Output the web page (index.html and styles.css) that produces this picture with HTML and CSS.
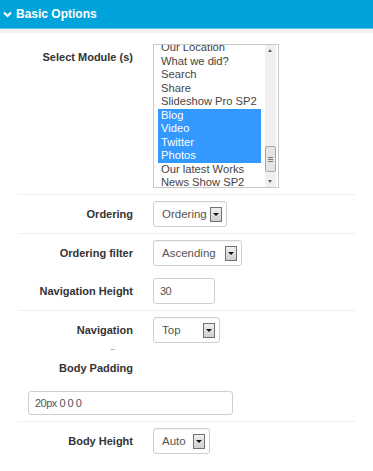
FILE: index.html
```html
<!DOCTYPE html>
<html>
<head>
<meta charset="utf-8">
<link rel="stylesheet" href="styles.css">
</head>
<body>
<div class="panel">
  <div class="panel-head">
    <svg class="chev" width="9" height="7" viewBox="0 0 9 7"><path d="M1 1.5 L4.5 5 L8 1.5" fill="none" stroke="#fff" stroke-width="2"/></svg>
    <span>Basic Options</span>
  </div>
  <div class="panel-strip"></div>
  <div class="form">
    <div class="row row-first sep">
      <div class="label">Select Module (s)</div>
      <div class="listbox">
        <div class="list-items">
          <div class="item">Our Location</div>
          <div class="item">What we did?</div>
          <div class="item">Search</div>
          <div class="item">Share</div>
          <div class="item">Slideshow Pro SP2</div>
          <div class="item sel">Blog</div>
          <div class="item sel">Video</div>
          <div class="item sel">Twitter</div>
          <div class="item sel">Photos</div>
          <div class="item">Our latest Works</div>
          <div class="item">News Show SP2</div>
        </div>
        <div class="scrollbar">
          <div class="sb-arrow up"></div>
          <div class="sb-track"><div class="sb-thumb"><span></span><span></span><span></span></div></div>
          <div class="sb-arrow down"></div>
        </div>
      </div>
    </div>
    <div class="row sep">
      <div class="label">Ordering</div>
      <div class="select w-ordering"><span class="sel-text">Ordering</span><span class="btn"></span></div>
    </div>
    <div class="row">
      <div class="label">Ordering filter</div>
      <div class="select w-asc"><span class="sel-text">Ascending</span><span class="btn"></span></div>
    </div>
    <div class="row sep">
      <div class="label">Navigation Height</div>
      <div class="input w-nav">30</div>
    </div>
    <div class="row row-open">
      <div class="label">Navigation</div>
      <div class="select w-top"><span class="sel-text">Top</span><span class="btn"></span></div>
    </div>
    <div class="stack sep">
      <div class="dots">...</div>
      <div class="label">Body Padding</div>
      <div class="input w-pad">20px 0 0 0</div>
    </div>
    <div class="row">
      <div class="label">Body Height</div>
      <div class="select w-auto"><span class="sel-text">Auto</span><span class="btn"></span></div>
    </div>
  </div>
</div>
</body>
</html>
```

FILE: styles.css
```css
html, body {
  margin: 0;
  padding: 0;
  background: #fff;
}
body {
  font-family: "Liberation Sans", Arial, sans-serif;
  color: #333;
}
.panel-head {
  height: 28px;
  background: #00a4db;
  border-bottom: 1px solid #5fc3e6;
  display: flex;
  align-items: center;
  color: #fff;
  font-size: 12px;
  font-weight: bold;
}
.chev {
  margin-left: 3px;
  margin-right: 4px;
}
.panel-strip {
  height: 4px;
  background: #f2f2f2;
}
.form {
  margin: 0 18px;
}
.row {
  display: flex;
  gap: 20px;
  padding: 6px 0;
}
.row-first {
  padding-top: 11px;
}
.row-open {
  padding-bottom: 0;
}
.sep {
  border-bottom: 1px solid #efefef;
}
.label {
  width: 115px;
  flex: none;
  text-align: right;
  font-size: 11px;
  font-weight: bold;
  line-height: 26px;
  color: #333;
}
.listbox {
  width: 124px;
  height: 142px;
  border: 1px solid #c8c8c8;
  display: flex;
  overflow: hidden;
  background: #fff;
}
.list-items {
  flex: 1;
  padding: 0 0 0 4px;
  margin-top: -4px;
  font-size: 11.2px;
  color: #444;
}
.item {
  height: 13.5px;
  line-height: 13.5px;
  padding-left: 3px;
  white-space: nowrap;
}
.item.sel {
  background: #3399ff;
  color: #fff;
}
.scrollbar {
  width: 11px;
  flex: none;
  margin: 0 2px 0 4px;
  display: flex;
  flex-direction: column;
  background: #f0f0f0;
}
.sb-arrow {
  height: 11px;
  position: relative;
}
.sb-arrow::after {
  content: "";
  position: absolute;
  left: 3px;
  top: 4px;
  border-left: 2.5px solid transparent;
  border-right: 2.5px solid transparent;
}
.sb-arrow.up::after {
  border-bottom: 3px solid #606060;
}
.sb-arrow.down::after {
  border-top: 3px solid #606060;
}
.sb-track {
  flex: 1;
  display: flex;
  flex-direction: column;
  justify-content: flex-end;
  padding-bottom: 4px;
}
.sb-thumb {
  height: 24px;
  background: #e4e4e4;
  border: 1px solid #a8a8a8;
  border-radius: 2px;
  display: flex;
  flex-direction: column;
  align-items: center;
  justify-content: center;
  gap: 1px;
}
.sb-thumb span {
  width: 5px;
  height: 1px;
  background: #777;
}
.select {
  height: 24px;
  border: 1px solid #cfcfcf;
  border-radius: 3px;
  background: #fff;
  display: flex;
  align-items: center;
  justify-content: space-between;
  padding: 0 4px 0 8px;
  box-sizing: content-box;
  box-shadow: inset 0 1px 1px rgba(0,0,0,0.04);
}
.sel-text {
  font-size: 11.5px;
  color: #555;
}
.btn {
  width: 10px;
  height: 13px;
  border: 1px solid #707070;
  background: linear-gradient(#f0f0f0, #cfcfcf);
  position: relative;
  flex: none;
}
.btn::after {
  content: "";
  position: absolute;
  left: 2px;
  top: 5px;
  border-left: 3px solid transparent;
  border-right: 3px solid transparent;
  border-top: 3px solid #111;
}
.w-ordering { width: 60px; }
.w-asc { width: 75px; }
.w-top { width: 53px; }
.w-auto { width: 43px; }
.input {
  height: 24px;
  border: 1px solid #cfcfcf;
  border-radius: 3px;
  background: #fff;
  font-size: 11px;
  color: #555;
  line-height: 24px;
  padding-left: 6px;
  letter-spacing: -0.5px;
  box-sizing: content-box;
}
.w-nav { width: 54px; }
.stack {
  display: flex;
  flex-direction: column;
  padding-bottom: 6px;
}
.dots {
  font-size: 9px;
  line-height: 8px;
  height: 13px;
  color: #888;
  margin-left: 92px;
  letter-spacing: -1px;
}
.stack .label {
  line-height: 24px;
  margin-bottom: 11px;
}
.w-pad {
  width: 197px;
  margin-left: 10px;
  height: 22px;
  line-height: 22px;
}
```
